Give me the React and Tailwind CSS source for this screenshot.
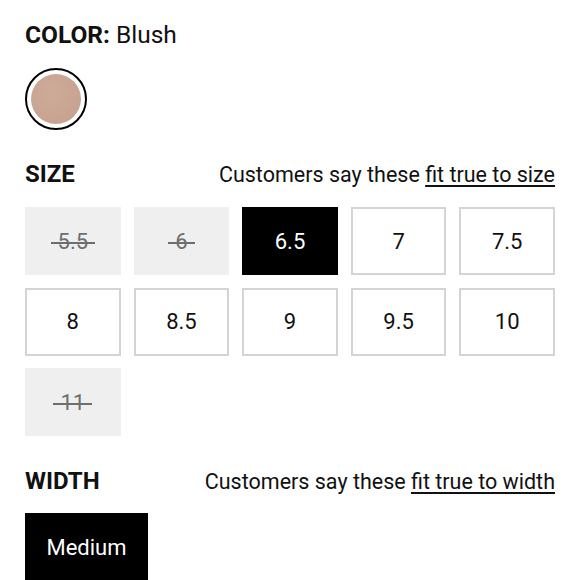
import React from 'react';

const sizes = [
  { v: '5.5', out: true },
  { v: '6', out: true },
  { v: '6.5', sel: true },
  { v: '7' },
  { v: '7.5' },
  { v: '8' },
  { v: '8.5' },
  { v: '9' },
  { v: '9.5' },
  { v: '10' },
  { v: '11', out: true },
];

function SizeBox({ s }) {
  if (s.out) {
    return (
      <div className="h-[68px] bg-[#efefef] flex items-center justify-center text-[22px] text-[#6e6e6e]">
        <span className="relative">
          {s.v}
          <span className="absolute -left-[7px] -right-[7px] top-[54%] h-[1.5px] bg-[#6e6e6e]" />
        </span>
      </div>
    );
  }
  if (s.sel) {
    return (
      <div className="h-[68px] bg-black flex items-center justify-center text-[22px] text-white">
        {s.v}
      </div>
    );
  }
  return (
    <div className="h-[68px] bg-white border-2 border-[#d4d4d4] flex items-center justify-center text-[22px] text-[#111]">
      {s.v}
    </div>
  );
}

export default function App() {
  return (
    <div className="w-[580px] h-[580px] overflow-hidden bg-white px-[25px] pt-[20px] text-[#111]" style={{ fontFamily: 'Roboto, "Liberation Sans", sans-serif' }}>
      <div className="h-[30px] leading-[30px] text-[24.5px]">
        <span className="font-bold">COLOR:</span> Blush
      </div>

      <div className="mt-[18px] w-[62px] h-[62px] rounded-full border-2 border-black p-[4px]">
        <div className="w-full h-full rounded-full bg-[radial-gradient(circle_at_40%_35%,#ceab98,#c4a08d)]" />
      </div>

      <div className="mt-[29px] flex justify-between items-baseline h-[30px] leading-[30px]">
        <span className="text-[24px] font-bold">SIZE</span>
        <span className="text-[21.5px]">
          Customers say these <span className="underline underline-offset-[3px]">fit true to size</span>
        </span>
      </div>

      <div className="mt-[18px] grid grid-cols-5 gap-x-[13px] gap-y-[12.5px]">
        {sizes.map((s) => (
          <SizeBox key={s.v} s={s} />
        ))}
      </div>

      <div className="mt-[30px] flex justify-between items-baseline h-[30px] leading-[30px]">
        <span className="text-[24px] font-bold">WIDTH</span>
        <span className="text-[21.5px]">
          Customers say these <span className="underline underline-offset-[3px]">fit true to width</span>
        </span>
      </div>

      <div className="mt-[17px] w-[123px] h-[68px] bg-black text-white text-[22px] flex items-center justify-center">
        Medium
      </div>
    </div>
  );
}
